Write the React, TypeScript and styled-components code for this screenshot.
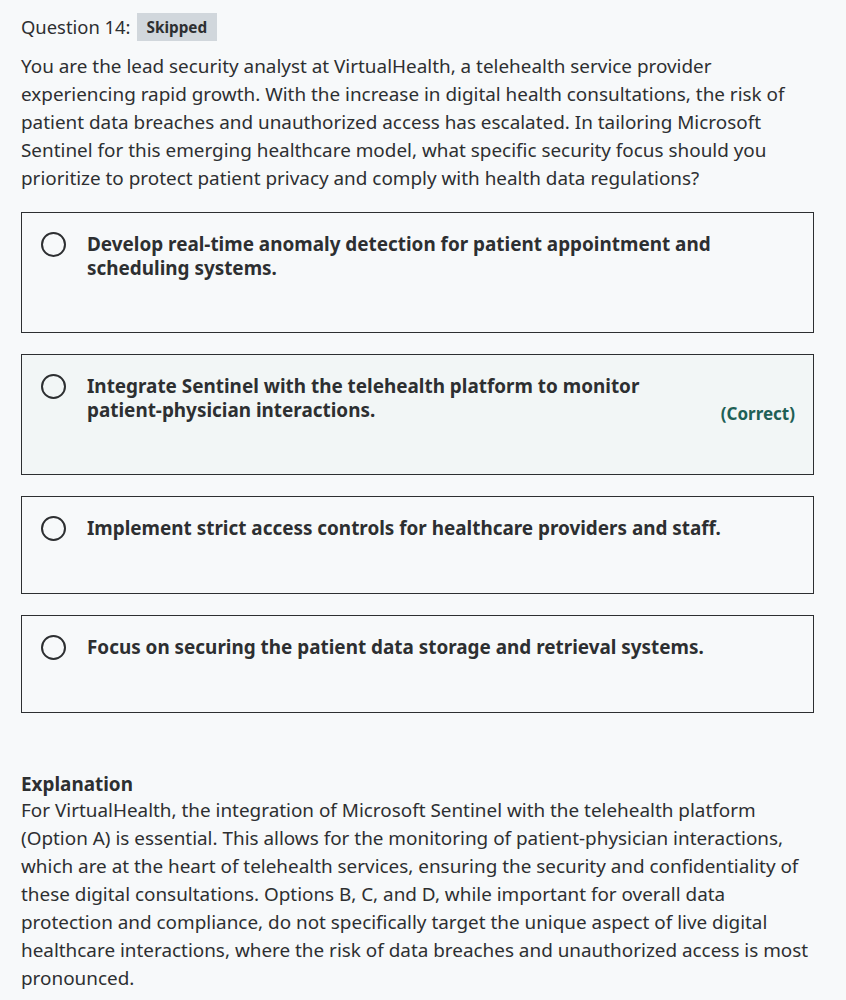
import React from "react";
import styled, { createGlobalStyle } from "styled-components";

const GlobalStyle = createGlobalStyle`
  html, body {
    margin: 0;
    padding: 0;
    background: #f7f9fa;
  }
  body {
    font-family: "Noto Sans", "Liberation Sans", sans-serif;
    color: #2d2f31;
  }
`;

const Page = styled.div`
  padding: 13px 32px 20px 21px;
  display: flex;
  flex-direction: column;
`;

const Header = styled.div`
  display: flex;
  align-items: center;
  gap: 6px;
  height: 28px;
`;

const QuestionLabel = styled.span`
  font-size: 18.4px;
  line-height: 28px;
  font-weight: 400;
`;

const Badge = styled.span`
  display: inline-flex;
  align-items: center;
  height: 28px;
  padding: 0 10px;
  background: #d1d7dc;
  font-size: 15.3px;
  font-weight: 700;
  color: #2d2f31;
`;

const Prompt = styled.p`
  margin: 11px 0 20px;
  font-size: 18.9px;
  line-height: 28px;
  max-width: 780px;
`;

const Options = styled.div`
  display: flex;
  flex-direction: column;
  gap: 21px;
  width: 793px;
`;

const Option = styled.div<{ $correct?: boolean }>`
  box-sizing: border-box;
  border: 1px solid #2d2f31;
  background: ${(p) => (p.$correct ? "#f2f6f6" : "#f7f9fa")};
  padding: 19px 18px 52px 19px;
  display: flex;
  align-items: flex-start;
  position: relative;
`;

const Radio = styled.span`
  box-sizing: border-box;
  flex: none;
  width: 25px;
  height: 25px;
  border: 2px solid #2d2f31;
  border-radius: 50%;
  margin-right: 21px;
`;

const OptionText = styled.div`
  flex: 1;
  font-size: 18.9px;
  font-weight: 700;
  line-height: 24px;
  max-width: 640px;
`;

const NoWrap = styled.span`
  white-space: nowrap;
`;

const CorrectTag = styled.span`
  position: absolute;
  right: 18px;
  top: calc(50% - 2px);
  transform: translateY(-50%);
  font-size: 17px;
  font-weight: 700;
  color: #1e6055;
`;

const ExplanationBlock = styled.div`
  margin-top: 59px;
`;

const ExplanationTitle = styled.div`
  font-size: 18.9px;
  font-weight: 700;
  line-height: 24px;
`;

const ExplanationText = styled.p`
  margin: 0;
  font-size: 18.9px;
  line-height: 28px;
  max-width: 800px;
`;

const options: { text: React.ReactNode; key: string; correct: boolean }[] = [
  { key: "a", text: "Develop real-time anomaly detection for patient appointment and scheduling systems.", correct: false },
  {
    key: "b",
    text: (
      <>
        Integrate Sentinel with the telehealth platform to monitor <NoWrap>patient-physician</NoWrap> interactions.
      </>
    ),
    correct: true,
  },
  { key: "c", text: "Implement strict access controls for healthcare providers and staff.", correct: false },
  { key: "d", text: "Focus on securing the patient data storage and retrieval systems.", correct: false },
];

export default function App() {
  return (
    <>
      <GlobalStyle />
      <Page>
        <Header>
          <QuestionLabel>Question 14:</QuestionLabel>
          <Badge>Skipped</Badge>
        </Header>
        <Prompt>
          You are the lead security analyst at VirtualHealth, a telehealth service provider experiencing rapid growth.
          With the increase in digital health consultations, the risk of patient data breaches and unauthorized access
          has escalated. In tailoring Microsoft Sentinel for this emerging healthcare model, what specific security focus
          should you prioritize to protect patient privacy and comply with health data regulations?
        </Prompt>
        <Options>
          {options.map((o) => (
            <Option key={o.key} $correct={o.correct}>
              <Radio />
              <OptionText>{o.text}</OptionText>
              {o.correct && <CorrectTag>(Correct)</CorrectTag>}
            </Option>
          ))}
        </Options>
        <ExplanationBlock>
          <ExplanationTitle>Explanation</ExplanationTitle>
          <ExplanationText>
            For VirtualHealth, the integration of Microsoft Sentinel with the telehealth platform (Option A) is essential.
            This allows for the monitoring of patient-physician interactions, which are at the heart of telehealth
            services, ensuring the security and confidentiality of these digital consultations. Options B, C, and D,
            while important for overall data protection and compliance, do not specifically target the unique aspect of
            live digital healthcare interactions, where the risk of data breaches and unauthorized access is most
            pronounced.
          </ExplanationText>
        </ExplanationBlock>
      </Page>
    </>
  );
}
